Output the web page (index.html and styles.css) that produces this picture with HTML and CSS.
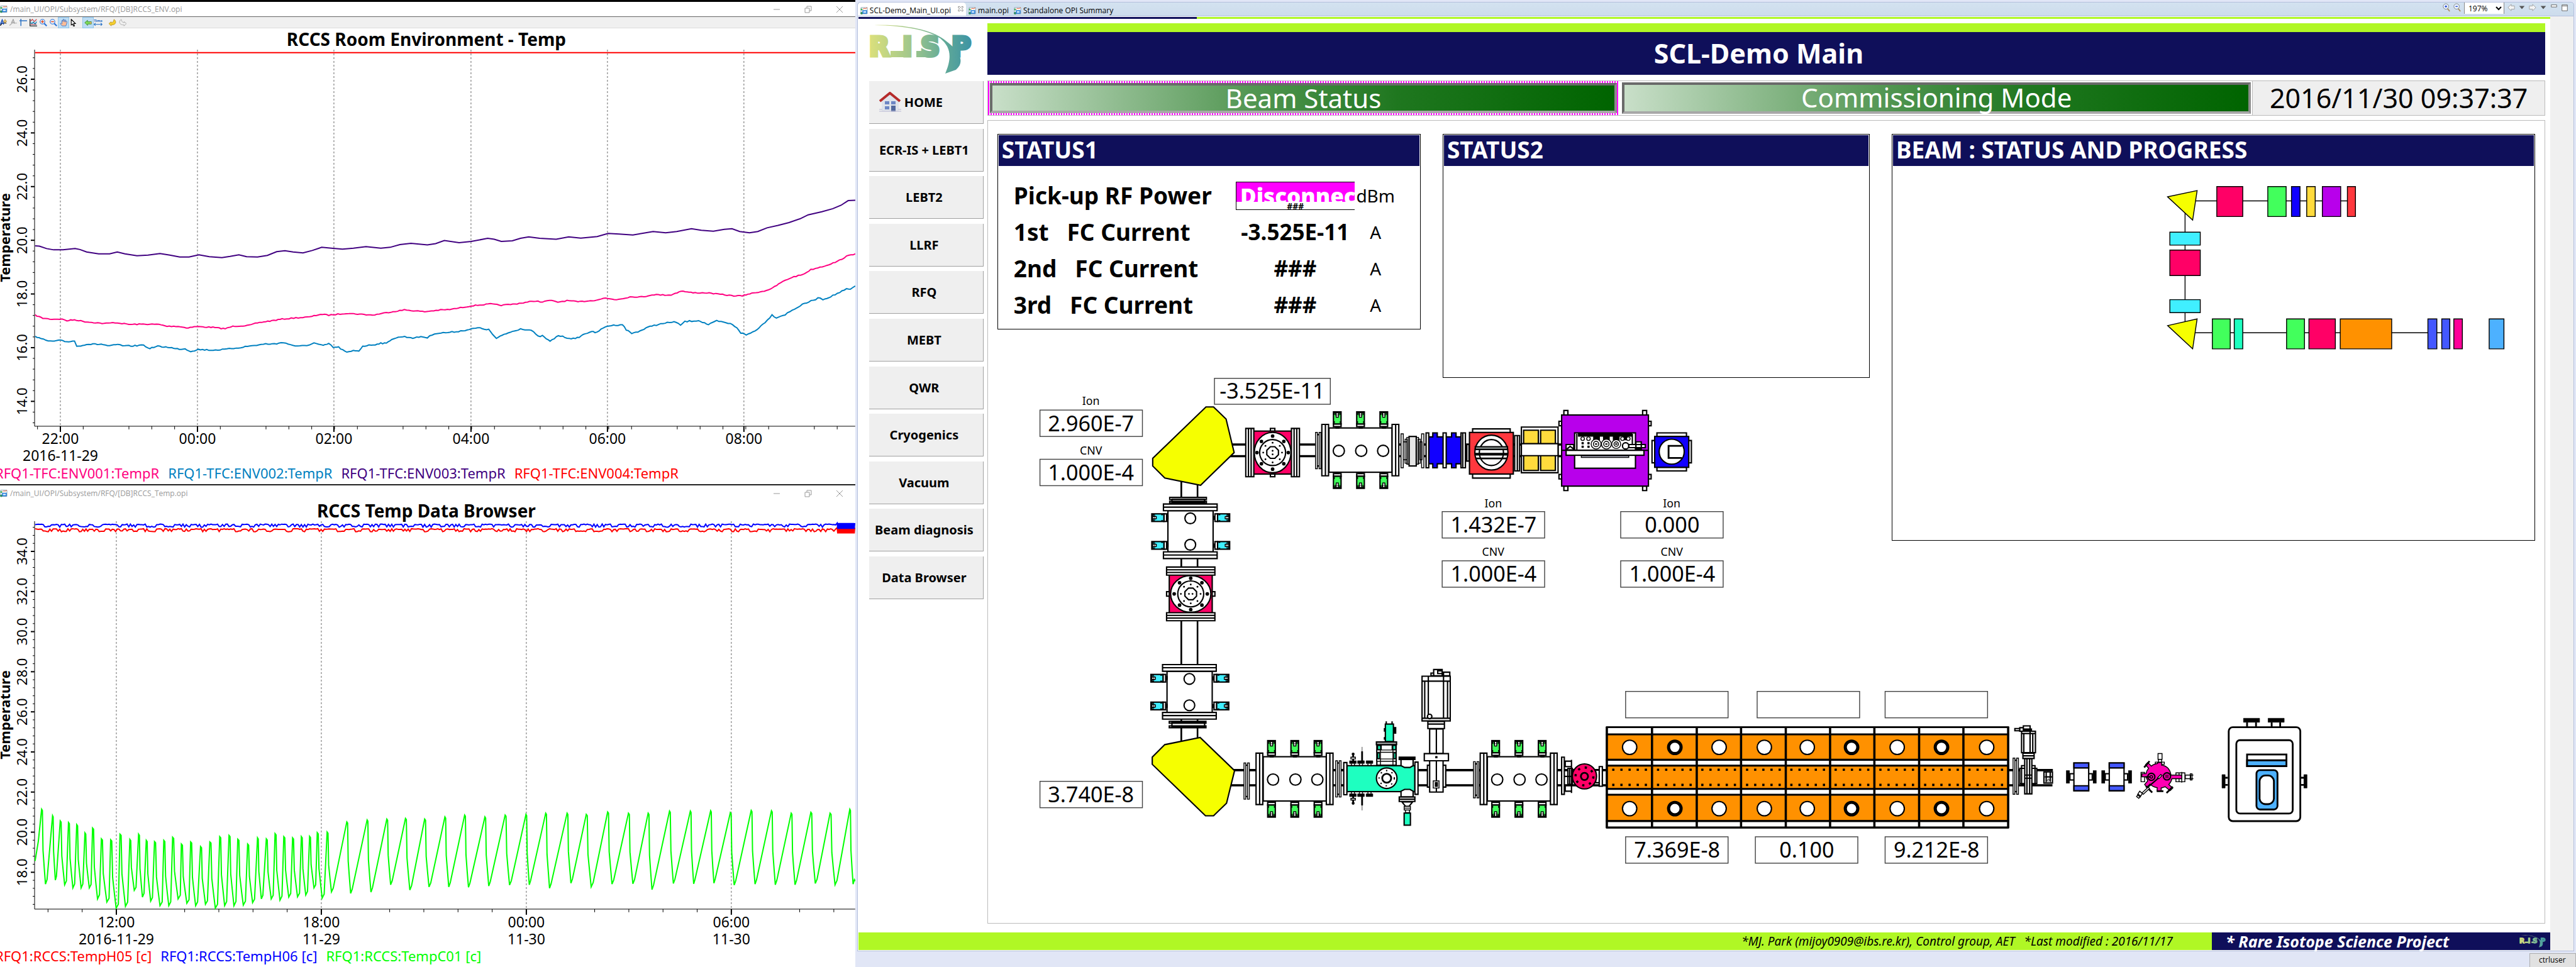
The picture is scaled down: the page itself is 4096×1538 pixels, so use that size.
FILE: index.html
```html
<!DOCTYPE html>
<html lang="en">
<head>
<meta charset="utf-8">
<title>SCL-Demo Main</title>
<link rel="stylesheet" href="styles.css">
</head>
<body>
<svg class="defs" width="0" height="0" aria-hidden="true">
  <defs>
    <linearGradient id="risp-fade" gradientUnits="userSpaceOnUse" x1="0" y1="0" x2="170" y2="0">
      <stop offset="0" stop-color="#dbe07c"/><stop offset=".4" stop-color="#9fc68c"/><stop offset=".7" stop-color="#62aa97"/><stop offset="1" stop-color="#3790a6"/>
    </linearGradient>
    <symbol id="risp" viewBox="0 0 172 80">
      <g fill="url(#risp-fade)">
        <text class="risp-letters" x="0 53 82 131" y="50">RISP</text>
        <path d="M34 42h21v10H34zM75 42h14v10H75z"/>
        <path d="M8 1C60-1 104 10 122 26C146 44 152 60 138 72L121 78C132 52 130 36 113 22C92 8 56 2 8 1Z"/>
      </g>
    </symbol>
    <symbol id="opi-icon" viewBox="0 0 12 12">
      <path d="M1 1h10v10H1z" fill="#fff" stroke="#8fa6b5"/><path d="M4 4l2-2 2 1 3-2" fill="none" stroke="#f0643c"/><circle cx="2" cy="4" r="1.500" fill="#3cae5a"/><circle cx="2" cy="10" r="2" fill="#2f8f62"/><path d="M4 6h6v4H4z" fill="#dcefff" stroke="#1e7ad6" stroke-width="1.500"/>
    </symbol>
  </defs>
</svg>

<div class="desktop">
  <aside class="plots">
    <section class="plot-window plot-window--env">
      <header class="titlebar">
        <svg class="titlebar__icon"><use href="#opi-icon"/></svg>
        <span class="titlebar__name">/main_UI/OPI/Subsystem/RFQ/[DB]RCCS_ENV.opi</span>
        <span class="titlebar__controls">
          <svg viewBox="0 0 12 12"><path d="M1 6h10"/></svg>
          <svg viewBox="0 0 12 12"><path d="M1 4h7v7H1zM4 4V1h7v7H8"/></svg>
          <svg viewBox="0 0 12 12"><path d="M1 1l10 10M11 1L1 11"/></svg>
        </span>
      </header>
      <div class="toolbar">
        <svg viewBox="0 0 16 16"><path d="M0 14c4 0 4-2 5-4s3-1 10-1" stroke="#000" fill="none" stroke-width="1.500"/><path d="M2 12L6 2l3 10M4 9h4" stroke="#1c50b8" fill="none" stroke-width="2"/><path d="M12 1l1 3 3 1-3 1-1 3-1-3-3-1 3-1z" fill="#ffd76a" stroke="#a8802a"/></svg>
        <svg viewBox="0 0 16 16"><path d="M0 14l6-5h10" stroke="#aaa" fill="none" stroke-width="1.500"/><path d="M4 9l4-8 3 9M5 7h5" stroke="#999" fill="none" stroke-width="1.500"/></svg>
        <svg viewBox="0 0 16 16"><path d="M0 4h16M3 0v15" stroke="#2f74c4" stroke-width="2"/></svg>
        <svg viewBox="0 0 16 16"><path d="M1 1h14v13H1z" fill="#c9f0ff"/><path d="M1 0v15h15" stroke="#000" fill="none" stroke-width="1.500"/><path d="M2 5l4-4 4 5 5-5M2 12h13" stroke="#d33" fill="none" stroke-width="1.500"/><path d="M2 8l3 2 3-3 4 4 3-5" stroke="#169" fill="none" stroke-width="1.500"/></svg>
        <svg viewBox="0 0 16 16"><path d="M9 9l6 6" stroke="#2c74d8" stroke-width="3"/><circle cx="6" cy="6" r="5" fill="#eef7ff" stroke="#2c74d8" stroke-width="1.500"/><path d="M3 6h6M6 3v6" stroke="#e0461c" stroke-width="2"/></svg>
        <svg viewBox="0 0 16 16"><path d="M9 9l6 6" stroke="#2c74d8" stroke-width="3"/><circle cx="6" cy="6" r="5" fill="#eef7ff" stroke="#2c74d8" stroke-width="1.500"/><path d="M3 6h6" stroke="#e0461c" stroke-width="2"/></svg>
        <svg class="is-on" viewBox="0 0 16 16"><path d="M5 15L1 10l2-1 2 1-1-6 2-1 1 3 0-5h2l1 5 1-4 2 1-1 4 2-2 2 1-3 9z" fill="#ffbd96" stroke="#1c6ad0"/></svg>
        <svg viewBox="0 0 16 16"><path d="M3 1l9 9H8l2 5-2 1-2-5-3 2z" fill="#fff" stroke="#000" stroke-width="1.500"/></svg>
        <svg class="is-on toolbar__gap" viewBox="0 0 16 16"><path d="M1 8l6-5v3h8v5H7v3z" fill="#7ed957" stroke="#2f7d23"/><path d="M12 7h3v3h-3z" fill="#f0a45a"/></svg>
        <svg class="time-icon" viewBox="0 0 20 16"><text x="10" y="6">Time</text><path d="M1 12h18M4 9l-3 3 3 3M16 9l3 3-3 3" stroke="#1b6ac4" fill="none" stroke-width="1.500"/></svg>
        <svg class="toolbar__gap" viewBox="0 0 16 16"><path d="M0 10l5-4v2c4 0 5-3 6-7 6 4 5 12-6 12v2z" fill="#f5cf2e" stroke="#b08a1a"/></svg>
        <svg viewBox="0 0 16 16"><path d="M16 10l-5-4v2C7 8 6 5 5 1c-6 4-5 12 6 12v2z" fill="#f0f0f0" stroke="#999"/></svg>
      </div>
      <h2>RCCS Room Environment - Temp</h2>
      <svg class="chart" id="chart-env" viewBox="0 79 1360 659" role="img" aria-label="Room temperature trend"></svg>
      <ul class="legend">
        <li class="c-pink">RFQ1-TFC:ENV001:TempR</li>
        <li class="c-blue">RFQ1-TFC:ENV002:TempR</li>
        <li class="c-indigo">RFQ1-TFC:ENV003:TempR</li>
        <li class="c-red">RFQ1-TFC:ENV004:TempR</li>
      </ul>
    </section>

    <section class="plot-window plot-window--temp">
      <header class="titlebar">
        <svg class="titlebar__icon"><use href="#opi-icon"/></svg>
        <span class="titlebar__name">/main_UI/OPI/Subsystem/RFQ/[DB]RCCS_Temp.opi</span>
        <span class="titlebar__controls">
          <svg viewBox="0 0 12 12"><path d="M1 6h10"/></svg>
          <svg viewBox="0 0 12 12"><path d="M1 4h7v7H1zM4 4V1h7v7H8"/></svg>
          <svg viewBox="0 0 12 12"><path d="M1 1l10 10M11 1L1 11"/></svg>
        </span>
      </header>
      <h2>RCCS Temp Data Browser</h2>
      <svg class="chart" id="chart-temp" viewBox="0 826 1360 680" role="img" aria-label="Cooling water temperature trend"></svg>
      <ul class="legend">
        <li class="c-red">RFQ1:RCCS:TempH05 [c]</li>
        <li class="c-navy">RFQ1:RCCS:TempH06 [c]</li>
        <li class="c-green">RFQ1:RCCS:TempC01 [c]</li>
      </ul>
    </section>
  </aside>

  <div class="station">
    <div class="tabbar">
      <div class="tabs">
        <a class="tab tab--active" href="#"><svg><use href="#opi-icon"/></svg>SCL-Demo_Main_UI.opi<svg class="tab__close" viewBox="0 0 10 10"><path d="M1 1h2l2 2 2-2h2v2L7 5l2 2v2H7L5 7 3 9H1V7l2-2-2-2z"/></svg></a>
        <a class="tab" href="#"><svg><use href="#opi-icon"/></svg>main.opi</a>
        <a class="tab" href="#"><svg><use href="#opi-icon"/></svg>Standalone OPI Summary</a>
      </div>
      <div class="zoombar">
        <svg viewBox="0 0 14 16"><circle cx="6" cy="6" r="5" fill="#eaf4ff" stroke="#777"/><path d="M4 6h4M6 4v4" stroke="#13c" stroke-width="1.500"/><path d="M9 10l4 5" stroke="#a88a5a" stroke-width="2"/></svg>
        <svg viewBox="0 0 14 16"><circle cx="6" cy="6" r="5" fill="#eaf4ff" stroke="#777"/><path d="M4 6h4" stroke="#13c" stroke-width="1.500"/><path d="M9 10l4 5" stroke="#a88a5a" stroke-width="2"/></svg>
        <select class="zoom" aria-label="Zoom"><option>197%</option></select>
        <svg viewBox="0 0 14 16"><path d="M1 8l6-6v3h6v6H7v3z" fill="#f4f4f4" stroke="#999"/></svg>
        <svg viewBox="0 0 14 16"><path d="M2 5h10L7 11z" fill="#555"/></svg>
        <svg viewBox="0 0 14 16"><path d="M13 8L7 2v3H1v6h6v3z" fill="#f4f4f4" stroke="#999"/></svg>
        <svg viewBox="0 0 14 16"><path d="M2 5h10L7 11z" fill="#555"/></svg>
        <svg viewBox="0 0 14 16"><path d="M2 3h10v4H2z" fill="#fff" stroke="#555"/></svg>
        <svg viewBox="0 0 14 16"><path d="M2 3h10v11H2zM2 5h10" fill="#fff" stroke="#555"/></svg>
      </div>
    </div>

    <div class="viewport">
      <div class="page">
        <div class="strip"></div>
        <div class="page__body">
          <div class="sidebar">
            <svg class="logo" role="img" aria-label="RISP"><use href="#risp"/></svg>
            <nav class="nav">
              <button class="nav__home" type="button"><svg viewBox="0 0 35 34"><path d="M4 12L17 2l14 10v20H4z" fill="#dfe3ea"/><path d="M1 15L17 2l16 13" fill="none" stroke="#b52a2a" stroke-width="4"/><path d="M9 15h7v5H9zM19 15h7v5h-7zM9 23h7v5H9z" fill="#6d86c4"/><path d="M19 22h7v10h-7z" fill="#52679c"/><path d="M0 28h5M30 28h5M0 31h35" stroke="#ccd" stroke-width="1.500"/></svg>HOME</button>
              <button type="button">ECR-IS + LEBT1</button>
              <button type="button">LEBT2</button>
              <button type="button">LLRF</button>
              <button type="button">RFQ</button>
              <button type="button">MEBT</button>
              <button type="button">QWR</button>
              <button type="button">Cryogenics</button>
              <button type="button">Vacuum</button>
              <button type="button">Beam diagnosis</button>
              <button type="button">Data Browser</button>
            </nav>
          </div>

          <main class="main">
            <h1>SCL-Demo Main</h1>
            <div class="modes">
              <div class="mode mode--lost"><span>Beam Status</span></div>
              <div class="mode"><span>Commissioning Mode</span></div>
              <time class="clock">2016/11/30 09:37:37</time>
            </div>

            <div class="workspace">
              <section class="panel panel--one">
                <h2>STATUS1</h2>
                <table class="readings">
                  <tr><th scope="row">Pick-up RF Power</th><td><div class="alarm"><b>Disconnected</b><small>###</small></div></td><td class="unit">dBm</td></tr>
                  <tr><th scope="row">1st   FC Current</th><td>-3.525E-11</td><td class="unit">A</td></tr>
                  <tr><th scope="row">2nd   FC Current</th><td>###</td><td class="unit">A</td></tr>
                  <tr><th scope="row">3rd   FC Current</th><td>###</td><td class="unit">A</td></tr>
                </table>
              </section>
              <section class="panel panel--two"><h2>STATUS2</h2></section>
              <section class="panel panel--beam">
                <h2>BEAM : STATUS AND PROGRESS</h2>
                <svg class="progress" viewBox="4230 371 1433 835" role="img" aria-label="Beam progress">
                  <path d="M4905 449h360M4883 470v250M4905 744h570" fill="none"/>
                  <path fill="#f6ff00" d="M4844 440L4910 426L4900 492ZM4844 728L4910 713L4900 780Z"/>
                  <path fill="#ff0066" d="M4954 417h58v67h-58zM4849 559h68v57h-68zM5160 713h59v67h-59z"/>
                  <path fill="#42ff5c" d="M5068 417h41v67h-41zM4944 713h40v67h-40zM5110 713h40v67h-40z"/>
                  <path fill="#1100ff" d="M5121 417h19v67h-19z"/>
                  <path fill="#ffdb3d" d="M5155 417h19v67h-19z"/>
                  <path fill="#b800eb" d="M5190 417h41v67h-41z"/>
                  <path fill="#ff383e" d="M5246 417h18v67h-18z"/>
                  <path fill="#40efff" d="M4849 519h68v29h-68zM4849 670h68v29h-68z"/>
                  <path fill="#1effc0" d="M4993 713h19v67h-19z"/>
                  <path fill="#ff9100" d="M5230 713h115v67h-115z"/>
                  <path fill="#4458ff" d="M5426 713h20v67h-20zM5457 713h18v67h-18z"/>
                  <path fill="#ff0099" d="M5484 713h19v67h-19z"/>
                  <path fill="#4db1ff" d="M5563 713h33v67h-33z"/>
                </svg>
              </section>

              <svg class="beamline" viewBox="2229 845 3437 1219" role="img" aria-label="Beam line">
                <defs>
                  <g id="actuator">
                    <path d="M7 33h6v4H7z" fill="#000"/><rect x="1" y="28" width="17" height="6"/>
                    <rect x="1" y="1" width="17" height="27" fill="#42ff5c"/>
                    <path d="M3 8v-5h3v6M16 8v-5h-3v6M3 26v-4M16 26v-4" fill="none" stroke-width="2"/>
                    <rect x="7" y="3" width="5" height="10" stroke-width="2"/><path d="M7 8h5" stroke-width="1"/>
                  </g>
                  <g id="actuator-c">
                    <path d="M7 33h6v4H7z" fill="#000"/><rect x="1" y="28" width="17" height="6"/>
                    <rect x="1" y="1" width="17" height="27" fill="#40efff"/>
                    <path d="M3 8v-5h3v6M16 8v-5h-3v6M3 26v-4M16 26v-4" fill="none" stroke-width="2"/>
                    <rect x="7" y="3" width="5" height="8" stroke-width="2"/><path d="M7 7h5" stroke-width="1"/>
                  </g>
                  <g id="quad">
                    <rect x="17" y="9" width="141" height="99"/>
                    <path d="M1 1h15v115H1zM158 1h15v115h-15zM9 1v115M166 1v115"/>
                    <circle cx="39" cy="60" r="12.500"/><circle cx="89" cy="60" r="12.500"/><circle cx="138" cy="60" r="12.500"/>
                    <use href="#actuator" x="26" y="-28"/><use href="#actuator" x="78" y="-28"/><use href="#actuator" x="130" y="-28"/>
                    <use href="#actuator" transform="translate(45 145) rotate(180)"/><use href="#actuator" transform="translate(97 145) rotate(180)"/><use href="#actuator" transform="translate(149 145) rotate(180)"/>
                  </g>
                  <g id="quad-v">
                    <rect x="11" y="16" width="101" height="92"/>
                    <path d="M1 1h120v15H1zM1 108h120v15H1zM1 8h120M1 115h120"/>
                    <circle cx="61" cy="33" r="12"/><circle cx="61" cy="92" r="12"/>
                    <use href="#actuator-c" transform="translate(-26 41) rotate(-90)"/><use href="#actuator-c" transform="translate(-26 103) rotate(-90)"/>
                    <use href="#actuator-c" transform="translate(150 22) rotate(90)"/><use href="#actuator-c" transform="translate(150 84) rotate(90)"/>
                  </g>
                  <g id="adapter"><rect x="4" y="6" width="6" height="70"/><path d="M1 1h4v81H1zM9 1h4v81H9z" stroke-width="2"/></g>
                  <g id="cup">
                    <rect x="-5" y="-54" width="10" height="108"/>
                    <rect x="-43" y="-48" width="86" height="96" fill="#ff0066"/>
                    <path d="M-60-54h18V54h-18zM42-54h18V54h-18zM-54-54V54M-48-54V54M54-54V54M48-54V54"/>
                    <ellipse rx="41" ry="45"/><circle r="29"/><path d="M-5-13h10l8 8v10l-8 8h-10l-8-8v-10z"/>
                    <g fill="#000" stroke="none">
                      <circle cx="0" cy="-37" r="4"/><circle cx="0" cy="37" r="4"/><circle cx="-35" r="4"/><circle cx="35" r="4"/>
                      <circle cx="-25" cy="-25" r="4"/><circle cx="25" cy="-25" r="4"/><circle cx="-25" cy="25" r="4"/><circle cx="25" cy="25" r="4"/>
                      <circle cy="-22" r="2"/><circle cy="22" r="2"/><circle cx="-21" r="2"/><circle cx="21" r="2"/>
                      <circle cx="-16" cy="-15" r="2"/><circle cx="16" cy="-15" r="2"/><circle cx="-16" cy="15" r="2"/><circle cx="16" cy="15" r="2"/>
                      <circle cy="-4" r="2"/><circle cy="4" r="2"/>
                    </g>
                  </g>
                  <g id="magnet">
                    <rect x="8" y="25" width="50" height="14"/>
                    <rect x="17" y="1" width="33" height="62"/><path d="M17 1h33v11H17zM17 52h33v11H17z" fill="#4458ff"/>
                    <path d="M1 19h5v26H1zM61 19h5v26h-5z" fill="#000"/>
                  </g>
                </defs>

                <!-- beam pipes -->
                <g stroke-width="5" fill="none">
                  <path d="M2740 994h400M2740 1020h400M3170 994h330M3170 1020h330M2740 1722h860M2740 1756h860M4485 1722h103M4485 1756h102"/>
                  <path d="M2640 1075v600M2676 1075v600" stroke-width="4"/>
                </g>
                <path d="M2642 1080h32v590h-32zM2750 997h380v20h-380zM2750 1726h840v27h-840z" stroke="none"/>

                <!-- bending magnets -->
                <g fill="#f6ff00">
                  <path d="M2695 910H2712L2740 937L2758 1012L2683 1085L2603 1069L2576 1042V1025Z"/>
                  <path d="M2694 1824H2712L2741 1796L2759 1723L2682 1649L2603 1665L2575 1693V1709Z"/>
                </g>

                <!-- vertical leg -->
                <path d="M2619 1116h73v6h-73zM2614 1112h82v5h-82zM2614 1121h82v4h-82z"/>
                <use href="#quad-v" x="2599" y="1126"/>
                <use href="#cup" transform="translate(2661 1328) rotate(90)"/>
                <use href="#quad-v" x="2597" y="1485"/>
                <path d="M2619 1616h73v8h-73zM2613 1613h82v4h-82zM2613 1623h82v4h-82z"/>

                <!-- upper leg -->
                <use href="#cup" x="2844" y="1012"/>
                <use href="#adapter" x="2939" y="966"/>
                <use href="#quad" x="2953" y="948"/>
                <path d="M3136 988h8v40h-8zM3140 982h5v54h-5zM3144 978h5v60h-5zM3165 978h5v60h-5zM3169 982h5v54h-5zM3173 988h5v40h-5zM3131 970h5v76h-5zM3177 970h5v76h-5z" stroke-width="2"/>
                <rect x="3149" y="976" width="16" height="66" fill="#e6e6e6"/>
                <path d="M3192 977h10v-9h10v9h32v-9h10v9h12v60h-12v9h-10v-9h-32v9h-10v-9h-10z" fill="#1100ff"/>
                <path d="M3187 968h6v78h-6zM3225 968h7v78h-7zM3265 968h10v78h-10zM3269 968v78M3278 994h5v37h-5z"/>
                <path d="M3291 959h84v9h-84zM3291 1060h84v9h-84zM3385 974h11v79h-11zM3391 974v79"/>
                <rect x="3284" y="967" width="98" height="93" fill="#ff383e"/>
                <ellipse cx="3333" cy="1012" rx="37" ry="39"/><ellipse cx="3333" cy="1012" rx="27" ry="29"/>
                <path d="M3297 999h72v6h-72zM3297 1014h72v3h-72z" fill="#8d9693"/><path d="M3298 1025h70" stroke-width="4"/>
                <path d="M3400 955h82v102h-82z"/><path d="M3405 962h33v90h-33zM3443 962h33v90h-33z" fill="#ffdb3d"/>
                <path d="M3400 992h82v27h-82z"/>
                <path d="M3495 918h9v10h-9zM3671 918h9v10h-9zM3495 1087h9v10h-9zM3671 1087h9v10h-9zM3484 942h6v10h-6zM3484 1061h6v10h-6zM3684 942h6v10h-6zM3684 1061h6v10h-6z"/>
                <rect x="3490" y="928" width="194" height="159" fill="#b800eb"/>
                <rect x="3519" y="968" width="136" height="79"/>
                <path d="M3528 969h118v6h-10v8h-8v-8h-10v8h-12v-8h-10v8h-12v-8h-10v8h-12v-8h-34z" fill="#000"/>
                <path d="M3500 994h17v12h-17zM3502 1004l7-6 8 6M3524 970v36M3648 970v24"/>
                <path d="M3490 1007h194"/><rect x="3500" y="1007" width="174" height="11"/>
                <path d="M3534 1019h106v4h-106z" fill="#aab" stroke-width="2"/>
                <g stroke-width="2"><circle cx="3567" cy="993" r="11"/><circle cx="3590" cy="993" r="11"/><circle cx="3612" cy="993" r="10"/><circle cx="3567" cy="993" r="6"/><circle cx="3590" cy="993" r="6"/><circle cx="3612" cy="993" r="5"/><circle cx="3537" cy="981" r="4"/><circle cx="3550" cy="981" r="4"/><circle cx="3626" cy="981" r="4"/><circle cx="3639" cy="981" r="4"/></g>
                <path d="M3535 989h4v4h-4zM3548 989h4v4h-4zM3535 997h4v4h-4zM3548 997h4v4h-4zM3565 992h4v2h-4zM3588 992h4v2h-4zM3610 992h4v2h-4z" fill="#000" stroke-width="1"/>
                <path d="M3656 988h12v16h-12zM3640 994h37v7h-37z"/><circle cx="3633" cy="997" r="7"/>
                <path d="M3703 968h66v8h-66zM3703 1045h66v8h-66zM3692 985h6v50h-6zM3774 985h6v50h-6z"/>
                <rect x="3698" y="976" width="76" height="69" fill="#1100ff"/><circle cx="3736" cy="1010" r="28"/>
                <path d="M3759 997h-30v27h30" stroke-width="4" fill="none"/>

                <!-- lower leg -->
                <use href="#adapter" x="2779" y="1705"/>
                <use href="#quad" x="2806" y="1683"/>
                <use href="#adapter" x="2984" y="1700"/>
                <rect x="3010" y="1712" width="152" height="58" fill="#1effc0"/>
                <path d="M3003 1705h7v72h-7zM3162 1704h7v72h-7z"/>
                <path d="M3016 1701h15v6h-15zM3034 1701h15v6h-15zM3053 1701h15v6h-15zM3016 1775h15v6h-15zM3034 1775h15v6h-15zM3053 1775h15v6h-15z" fill="#000" stroke-width="1"/>
                <path d="M3020 1707v5M3027 1707v5M3038 1707v5M3045 1707v5M3057 1707v5M3064 1707v5M3020 1770v5M3027 1770v5M3038 1770v5M3045 1770v5M3057 1770v5M3064 1770v5" stroke-width="2"/>
                <path d="M3024 1683v18M3024 1781v18M3044 1680v21M3044 1781v20M3021 1686h6M3021 1796h6" stroke-width="4"/>
                <path d="M3044 1670v30M3044 1781v31" stroke-width="1"/>
                <path d="M3019 1693h10v4h-10zM3019 1785h10v4h-10z" stroke-width="2"/>
                <path d="M3077 1665h43v46h-43z"/><path d="M3079 1667h8v9h-8zM3111 1667h8v9h-8zM3079 1684h4v12h-4zM3115 1684h4v12h-4z" fill="#1effc0" stroke-width="2"/><path d="M3077 1677h43v5h-43zM3077 1697h43v5h-43zM3085 1665v46M3113 1665v46" stroke-width="2"/>
                <rect x="3076" y="1659" width="45" height="6" fill="#aaa"/>
                <rect x="3096" y="1619" width="18" height="39" fill="#1effc0"/><path d="M3098 1613v6M3111 1613v6M3094 1628v8M3094 1648v6M3116 1627h3v12h-3z"/>
                <circle cx="3099" cy="1740" r="23"/><circle cx="3099" cy="1740" r="17" stroke-width="3" stroke-dasharray="3 10" fill="none"/><circle cx="3099" cy="1740" r="10" stroke-width="4"/>
                <path d="M3131 1698v14l8 4h12l7-4v-14zM3131 1782v-13l8-4h12l7 4v13z"/><path d="M3127 1693h35v5h-35z" fill="#000"/>
                <path d="M3127 1782h35v10h-35zM3127 1787h35M3133 1793h24l-8 10h-8z"/><path d="M3138 1803h14v8h-14zM3141 1811h9v6h-9zM3138 1807h14" stroke-width="2"/><rect x="3138" y="1818" width="14" height="27" fill="#1effc0"/>
                <path d="M3204 1497h19v14h-19zM3198 1505h6v6h-6zM3226 1503h14v8h-14zM3213 1500h10v6h-10z"/>
                <path d="M3178 1512h63v100h-63zM3178 1523h63M3178 1606h63M3184 1523v83M3192 1512v94M3226 1512v94M3235 1523v83" stroke-width="3"/><circle cx="3195" cy="1602" r="5"/>
                <path d="M3191 1613h37v16h-37zM3191 1619h37M3195 1630h30v55h-30zM3210 1630v55"/>
                <path d="M3190 1711h41v49h-41z"/><path d="M3195 1701h30v70h-30zM3210 1701v70"/><path d="M3183 1685h54v16h-54z"/><path d="M3203 1746h13v16h-13z" stroke-width="2"/><path d="M3208 1750h4v8h-4zM3209 1692h2v2h-2z" fill="#000"/>
                <use href="#adapter" x="3292" y="1702"/>
                <use href="#quad" x="3307" y="1683"/>
                <path d="M3490 1693h6v83h-6z"/><path d="M3498 1702h14v12h-14zM3498 1757h14v12h-14zM3504 1718h10v36h-10zM3508 1718v36M3497 1736h20M3512 1699v74" stroke-width="3"/>
                <path d="M3566 1722h8v28h-8zM3574 1714h7v44h-7z"/>
                <ellipse cx="3541" cy="1736" rx="27" ry="28" fill="#ff0066"/><circle cx="3541" cy="1736" r="20" stroke-width="5" stroke-dasharray="5 10.700" fill="none"/><circle cx="3541" cy="1736" r="8" stroke-width="4" fill="#ff0066"/>

                <!-- cryomodule -->
                <rect x="3591" y="1626" width="897" height="225"/>
                <path d="M3591 1642h897v56h-897zM3591 1712h897v52h-897zM3591 1777h897v58h-897z" fill="#ff9100"/>
                <path d="M3589 1626h901M3589 1642h901M3589 1699h901M3589 1712h901M3589 1764h901M3589 1777h901M3589 1836h901M3589 1850h901" stroke-width="4"/>
                <path d="M3591 1625v226M3692 1625v226M3792 1625v226M3891 1625v226M3991 1625v226M4090 1625v226M4189 1625v226M4289 1625v226M4388 1625v226M4488 1625v226" stroke-width="5"/>
                <g id="ports">
                  <circle cx="3642" cy="1671" r="16"/><circle cx="3743" cy="1671" r="14" stroke-width="7"/><circle cx="3842" cy="1671" r="16"/><circle cx="3943" cy="1671" r="16"/><circle cx="4039" cy="1671" r="16"/><circle cx="4138" cy="1671" r="14" stroke-width="7"/><circle cx="4240" cy="1671" r="16"/><circle cx="4339" cy="1671" r="14" stroke-width="7"/><circle cx="4440" cy="1671" r="16"/>
                </g>
                <use href="#ports" y="137"/>
                <g id="bolts" stroke-width="5" stroke-dasharray="5 13.200" fill="none">
                  <path id="bolt-row" d="M3603 1721h80"/><use href="#bolt-row" x="100"/><use href="#bolt-row" x="199"/><use href="#bolt-row" x="299"/><use href="#bolt-row" x="398"/><use href="#bolt-row" x="497"/><use href="#bolt-row" x="597"/><use href="#bolt-row" x="697"/><use href="#bolt-row" x="796"/>
                </g>
                <use href="#bolts" y="34"/>

                <!-- diagnostics after the cryomodule -->
                <use href="#adapter" x="4498" y="1694"/>
                <path d="M4514 1718h38v34h-38zM4518 1712h30v42h-30z"/>
                <path d="M4525 1696h16v79h-16zM4530 1696v79M4536 1696v79M4525 1733h16v7h-16z"/>
                <path d="M4521 1684h25v12h-25zM4521 1690h25M4518 1635h31v48h-31zM4518 1640h31M4523 1640v43M4537 1635v48M4543 1640v43"/>
                <path d="M4522 1623h15v10h-15zM4514 1627h8v8h-8zM4503 1629h11v5h-11z"/><path d="M4524 1630h16v5h-16z" fill="#000"/>
                <path d="M4568 1726h19v25h-19zM4573 1726v25M4582 1726v25M4570 1737h16"/><path d="M4572 1750l6-9 6 9z" fill="#bbb" stroke-width="1"/>
                <use href="#magnet" x="4618" y="1705"/><use href="#magnet" x="4697" y="1705"/>
                <g>
                  <path d="M4823 1685h9v13h-9zM4824 1698v8M4831 1698v8M4817 1704h20v5h-20z" stroke-width="2"/>
                  <path d="M4785 1727h8v21h-8zM4863 1728h20v20h-20zM4884 1733h12v8h-12zM4895 1730h4v14h-4zM4870 1728v20M4876 1726v24M4893 1733h9M4893 1741h9" stroke-width="2"/>
                  <path d="M4822 1705h9v6c10 1 18 6 21 22h24v8h-22c-1 6-4 10-7 13l9 8-6 6-11-9-9 3v6h-9v-7c-7-1-12-4-16-8l-7 7-5-6 7-8-4-9h-9v-7h9c1-5 3-9 6-12l-7-8 5-5 8 8c4-4 8-5 14-6z" fill="#ff00b3" stroke-width="2"/>
                  <path d="M4820 1769h15M4792 1716l12-14M4796 1758l14 14M4842 1773l14-14" stroke-width="4"/>
                  <g fill="none"><circle cx="4808" cy="1737" r="8"/><circle cx="4808" cy="1737" r="3" stroke-width="2"/><circle cx="4843" cy="1736" r="8"/><path d="M4841 1732v8M4845 1732v8" stroke-width="2"/></g>
                  <path d="M4795 1737h10M4826 1738l-28 24"/><path d="M4822 1739l7-7 3 2-7 7z" stroke-width="2"/>
                  <path d="M4801 1760l-14 13 3 3 14-13zM4782 1769l6 5-5 8-6-5zM4779 1776l5 4-4 5-5-4z" stroke-width="2"/>
                </g>

                <!-- beam dump -->
                <path d="M5014 1606h36v9h-36zM5069 1606h36v9h-36zM4966 1732h7v30h-7zM5149 1732h7v30h-7z" fill="#000" stroke-width="1"/>
                <path d="M5022 1615v10M5042 1615v10M5077 1615v10M5096 1615v10M4973 1739h6M4973 1755h6M5142 1739h8M5142 1755h8" stroke-width="4"/>
                <g stroke-width="4"><rect x="4981" y="1626" width="160" height="210" rx="9"/><rect x="4998" y="1655" width="126" height="164" rx="8"/>
                  <rect x="5022" y="1687" width="88" height="26"/><path d="M5022 1700h88v13h-88z" fill="#4db1ff"/>
                  <rect x="5043" y="1722" width="47" height="88" rx="8" fill="#4db1ff"/><rect x="5050" y="1734" width="32" height="64" rx="13"/></g>

                <!-- vacuum gauges and cup readouts -->
                <g class="gauge">
                  <rect x="2714" y="846" width="259" height="58"/><text x="2843" y="892">-3.525E-11</text>
                  <rect x="2324" y="917" width="229" height="59"/><text x="2438" y="964">2.960E-7</text>
                  <rect x="2324" y="1027" width="229" height="59"/><text x="2438" y="1074">1.000E-4</text>
                  <rect x="3223" y="1144" width="229" height="59"/><text x="3338" y="1191">1.432E-7</text>
                  <rect x="3223" y="1254" width="229" height="59"/><text x="3338" y="1301">1.000E-4</text>
                  <rect x="3622" y="1144" width="229" height="59"/><text x="3737" y="1191">0.000</text>
                  <rect x="3622" y="1254" width="229" height="59"/><text x="3737" y="1301">1.000E-4</text>
                  <rect x="2324" y="1747" width="229" height="59"/><text x="2438" y="1794">3.740E-8</text>
                  <rect x="3633" y="1546" width="229" height="59"/><rect x="3927" y="1546" width="229" height="59"/><rect x="4213" y="1546" width="229" height="59"/>
                  <rect x="3633" y="1871" width="229" height="59"/><text x="3748" y="1918">7.369E-8</text>
                  <rect x="3923" y="1871" width="229" height="59"/><text x="4038" y="1918">0.100</text>
                  <rect x="4213" y="1871" width="229" height="59"/><text x="4328" y="1918">9.212E-8</text>
                </g>
                <g class="gauge-name">
                  <text x="2438" y="906">Ion</text><text x="2438" y="1016">CNV</text>
                  <text x="3337" y="1134">Ion</text><text x="3337" y="1243">CNV</text>
                  <text x="3736" y="1134">Ion</text><text x="3736" y="1243">CNV</text>
                </g>
              </svg>
            </div>
          </main>
        </div>
        <footer class="credits">
          <p class="credits__author">*MJ. Park (mijoy0909@ibs.re.kr), Control group, AET   *Last modified : 2016/11/17</p>
          <p class="credits__project">* Rare Isotope Science Project<svg><use href="#risp"/></svg></p>
        </footer>
      </div>
    </div>
    <div class="statusbar"><span class="user">ctrluser</span></div>
  </div>
</div>
<script src="charts.js"></script>
</body>
</html>
```

FILE: styles.css
```css
* { box-sizing: border-box; }

body {
  margin: 0;
  background: #e1e6f6;
  color: #000;
  font-family: "Noto Sans", "Open Sans", sans-serif;
  font-size: 22px;
}

h1, h2, p, ul { margin: 0; padding: 0; }

.defs { position: absolute; }

.desktop {
  display: flex;
  gap: 3px;
  min-height: 100vh;
}

/* trend windows */
.plots {
  flex: 0 0 33.2%;
  display: flex;
  flex-direction: column;
  overflow: hidden;
  background: #fff;
}

.plot-window--env { border-top: 3px solid #000; padding-bottom: 4px; }
.plot-window--temp { border-top: 2px solid #222; }

.titlebar {
  display: flex;
  align-items: center;
  height: 24px;
  gap: 4px;
  border-bottom: 1px solid #666;
  color: #999;
  font: 12px "Open Sans", sans-serif;
}
.plot-window--temp .titlebar { height: 26px; border-bottom: 0; }
.titlebar__icon { width: 12px; height: 17px; }
.titlebar__controls {
  display: flex;
  gap: 38px;
  margin-left: auto;
  padding-right: 19px;
}
.titlebar__controls svg {
  width: 12px;
  height: 12px;
  fill: none;
  stroke: #999;
}

.toolbar {
  display: flex;
  align-items: center;
  height: 18px;
  margin-left: -3px;
  background: #f0f0f0;
  border-bottom: 1px solid #ddd;
}
.toolbar svg { width: 16px; height: 16px; padding: 2px; }
.toolbar .is-on { background: #bcdcf4; outline: 1px solid #8fc4ea; }
.toolbar .toolbar__gap { margin-left: 7px; }
.toolbar .time-icon { padding: 1px; }
.time-icon text { fill: #1b6ac4; font-size: 8px; font-weight: 700; text-anchor: middle; }

.plot-window h2 {
  height: 34px;
  padding-right: 4px;
  font-size: 28px;
  line-height: 34px;
  text-align: center;
}
.plot-window--temp h2 { height: 28px; line-height: 28px; }

.chart { display: block; width: 100%; overflow: visible; }
.chart .axis { stroke: #000; stroke-width: 1; fill: none; }
.chart .major { stroke: #000; stroke-width: 2; }
.chart .minor { stroke: #000; stroke-width: 1; }
.chart .grid { stroke: #000; stroke-width: 1; stroke-dasharray: 3 3; stroke-opacity: .6; }
.chart .series { fill: none; stroke-width: 2; }
.chart text { text-anchor: middle; font-size: 23px; }
.chart text.y { font-size: 22px; }
.chart text.axis-name { font-size: 22px; font-weight: 700; }

.legend {
  display: flex;
  gap: 14px;
  height: 28px;
  margin-left: -8px;
  line-height: 28px;
  list-style: none;
  white-space: nowrap;
}
.c-pink { color: #ff0080; stroke: #ff0080; }
.c-blue { color: #0080c0; stroke: #0080c0; }
.c-indigo { color: #400080; stroke: #400080; }
.c-red { color: #f00; stroke: #f00; }
.c-navy { color: #00f; stroke: #00f; }
.c-green { color: #0f0; stroke: #0f0; }
.legend li { stroke: none; }

/* operator station */
.station {
  flex: 1;
  min-width: 0;
  display: flex;
  flex-direction: column;
  padding: 3px 3px 0 0;
}

.tabbar {
  display: flex;
  justify-content: space-between;
  height: 23px;
  background: linear-gradient(#d3e2f0, #cddcec);
  border: 1px solid #b4c0dc;
  border-radius: 5px 5px 0 0;
  font: 12px "Open Sans", sans-serif;
}
.tabs { display: flex; }
.tab {
  display: flex;
  align-items: center;
  gap: 3px;
  padding: 4px 4px 0 4px;
  color: #000;
  text-decoration: none;
}
.tab svg { width: 12px; height: 14px; }
.tab .tab__close {
  width: 9px;
  height: 10px;
  margin: -6px 0 0 8px;
  fill: #fff;
  stroke: #777;
}
.tab--active { background: #fff; border-radius: 5px 5px 0 0; }

.zoombar {
  display: flex;
  align-items: flex-start;
  gap: 5px;
  padding-right: 8px;
}
.zoombar svg { width: 12px; height: 16px; }
.zoom {
  width: 64px;
  height: 18px;
  padding: 0 2px;
  border: 1px solid #888;
  border-width: 0 1px 0 1px;
  background: #fff;
  color: #000;
  font: 12px "Open Sans", sans-serif;
}

.viewport {
  display: flex;
  padding: 1px 37px 1px 1px;
  background: linear-gradient(#f0f0f0, #f0f0f0) right / 37px 100% no-repeat #fff;
  border: 1px solid #b4c0dc;
  border-top: 0;
}
.page { flex: 1; min-width: 0; background: #fff; }
.strip { height: 3px; background: linear-gradient(90deg, #0f0f5a 20%, #b0f725 20%); }
.page__body {
  display: flex;
  padding: 7px 8px 14px 0;
}

.sidebar { flex: 0 0 205px; padding: 2px 6px 0 17px; }
.logo { display: block; width: 172px; height: 80px; margin-bottom: 10px; }
.risp-letters {
  font: 700 42px "DejaVu Sans", sans-serif;
  stroke: url(#risp-fade);
  stroke-width: 5px;
}

.nav {
  display: flex;
  flex-direction: column;
  justify-content: space-between;
  height: 824px;
}
.nav button {
  display: flex;
  align-items: center;
  justify-content: center;
  height: 68px;
  padding: 0 6px 0 0;
  background: #efefef;
  border: solid #a0a0a0;
  border-width: 0 1px 1px 0;
  font: 700 20px "Noto Sans", sans-serif;
  white-space: nowrap;
}
.nav .nav__home { justify-content: flex-start; gap: 5px; padding-left: 16px; }
.nav__home svg { width: 35px; height: 34px; }

.main { flex: 1; min-width: 0; }
h1 {
  height: 82px;
  padding-right: 24px;
  border-top: 14px solid #b0f725;
  background: #0f0f5a;
  color: #fff;
  font-size: 43px;
  line-height: 68px;
  text-align: center;
}

.modes {
  display: grid;
  grid-template-columns: 1004fr 1008fr 465fr;
  height: 56px;
  margin: 9px 0 7px;
  border: 1px solid #bbb;
}
.mode {
  display: flex;
  margin-left: 3px;
  padding: 2px;
}
.mode--lost {
  margin: 0;
  padding: 3px;
  background: repeating-linear-gradient(90deg, #f0f 0 2px, #fff 2px 4px);
}
.mode span {
  flex: 1;
  border: 4px solid;
  border-color: #6a6a6a #8c8c8c #a8a8a8 #6a6a6a;
  background: linear-gradient(90deg, #c9dfc9, #529652 42%, #1f771f 65%, #006400);
  color: #fff;
  font-size: 42px;
  line-height: 40px;
  text-align: center;
}
.clock {
  background: #efefef;
  border-left: 1px solid #bbb;
  font-size: 43px;
  line-height: 54px;
  text-align: center;
}

.workspace {
  display: grid;
  grid-template-columns: 673fr 679fr 1023fr;
  column-gap: 35px;
  align-items: start;
  padding: 21px 15px 0;
  border: 1px solid #bbb;
}
.panel { padding: 1px; border: 1px solid #000; }
.panel h2 {
  height: 49px;
  padding-left: 5px;
  background: #0f0f5a;
  color: #fff;
  font-size: 37px;
  line-height: 46px;
  white-space: nowrap;
}
.panel--one { min-height: 311px; }
.panel--two { min-height: 388px; }
.panel--beam { grid-area: 1 / 3 / span 2; }
.progress { display: block; width: 100%; stroke: #000; stroke-width: 2; }

.readings {
  width: 91%;
  margin: 18px 0 0 24px;
  border-collapse: collapse;
  table-layout: fixed;
  font-size: 35px;
  font-weight: 700;
}
.readings tr { height: 58px; }
.readings th, .readings td { padding: 0; line-height: 44px; }
.readings th {
  width: 58%;
  font-size: 37px;
  text-align: left;
  white-space: pre;
}
.readings td { width: 31%; text-align: center; }
.readings .unit { width: 11%; font-size: 28px; font-weight: 400; }
.alarm {
  height: 45px;
  border: 1px solid #000;
  border-right: 0;
  overflow: hidden;
}
.alarm b {
  display: block;
  height: 31px;
  padding-left: 6px;
  overflow: hidden;
  background: #f0f;
  color: #fff;
  font-size: 35px;
  text-align: left;
}
.alarm small { display: block; font-size: 14px; line-height: 13px; }

.beamline {
  grid-area: 2 / 1 / auto / -1;
  display: block;
  width: 100%;
  fill: #fff;
  stroke: #000;
  stroke-width: 3;
}
.beamline text { fill: #000; stroke: none; text-anchor: middle; }
.gauge { font-size: 48px; stroke: #444; stroke-width: 2; }
.gauge-name { font-size: 25px; }

.credits { display: flex; height: 28px; }
.credits p {
  font-style: italic;
  line-height: 28px;
  white-space: pre;
}
.credits__author {
  flex: 1;
  padding-right: 62px;
  background: #b0f725;
  font-size: 19px;
  text-align: right;
}
.credits__project {
  display: flex;
  flex: 0 0 20%;
  justify-content: space-between;
  padding: 0 5px 0 22px;
  background: #0f0f5a;
  color: #fff;
  font-size: 25px;
  font-weight: 700;
}
.credits__project svg { width: 44px; height: 28px; }

.statusbar {
  display: flex;
  flex: 1;
  justify-content: flex-end;
  margin-right: -3px;
  padding-top: 3px;
}
.user {
  width: 74px;
  padding: 1px 0 0 14px;
  background: #e1e1e1;
  border: 1px solid #adadad;
  border-bottom: 0;
  font: 12px "Open Sans", sans-serif;
}
```

FILE: charts.js
```js
const NS = "http://www.w3.org/2000/svg";

function add(parent, tag, attrs, text) {
  const el = document.createElementNS(NS, tag);
  for (const key in attrs) el.setAttribute(key, attrs[key]);
  if (text) el.textContent = text;
  parent.appendChild(el);
  return el;
}

let seed = 7;
function noise() {
  seed = (seed * 16807) % 2147483647;
  return seed / 2147483647 - 0.5;
}

// Samples are stored on a 0-1561 grid in both directions.
const scaleX = 0.8713;

function drawChart(id, c) {
  const svg = document.getElementById(id);
  const right = 1360;
  c.xMajor.forEach((x, i) => {
    add(svg, "path", { class: "grid", d: `M${x} ${c.top}V${c.bottom}` });
    c.xLabels[i].forEach((label, row) =>
      add(svg, "text", { x, y: c.labelY[row] }, label));
  });
  add(svg, "path", { class: "axis", d: `M55 ${c.top}V${c.bottom}H${right}` });
  c.series.forEach(s => {
    const d = s.points.map(([x, y], i) =>
      (i ? "L" : "M") + (x * scaleX).toFixed(1) + " " + (c.y0 + y * c.scaleY).toFixed(1)).join("");
    add(svg, "path", { class: "series " + s.name, d });
  });
  c.xMajor.forEach(x => {
    add(svg, "path", { class: "major", d: `M${x} ${c.bottom}v9` });
  });
  const pitch = c.xMajor[1] - c.xMajor[0];
  for (let k = -3; k < 40; k++) {
    const x = c.xMajor[0] + k * pitch / 6;
    if (x > 58 && x < right && k % 6 !== c.skip) add(svg, "path", { class: "minor", d: `M${x} ${c.bottom}v5` });
  }
  for (let k = -10; k < 60; k++) {
    const y = c.yFirst + k * c.yPitch / 5;
    if (y < c.top + 8 || y > c.bottom - 3) continue;
    const major = k % 5 === 0;
    add(svg, "path", { class: major ? "major" : "minor", d: `M${major ? 49 : 52} ${y}H55` });
    if (major && k >= 0) {
      add(svg, "text", { class: "y", transform: `translate(43 ${y}) rotate(-90)` },
        (c.yStart - 2 * k / 5).toFixed(1));
    }
  }
  add(svg, "text", { class: "axis-name", transform: `translate(16 ${c.nameY}) rotate(-90)` }, "Temperature");
}

function pairs(text) {
  return text.trim().split(/\s+/).map(p => p.split(",").map(Number));
}

function roughen(points, amount) {
  const out = [];
  for (let i = 0; i < points.length - 1; i++) {
    const [x1, y1] = points[i], [x2, y2] = points[i + 1];
    const n = Math.max(1, Math.round((x2 - x1) / 4));
    for (let k = 0; k < n; k++) {
      out.push([x1 + (x2 - x1) * k / n, y1 + (y2 - y1) * k / n + noise() * amount]);
    }
  }
  out.push(points[points.length - 1]);
  return out;
}

const indigo = pairs(`64,794 72,795 85,803 98,807 115,807 137,803 146,806 158,814 180,820 200,820 214,814 228,820 250,826 270,824 292,819 310,824 328,830 345,830 363,823 382,829 405,832 420,828 436,823 450,829 470,830 488,825 505,813 520,810 535,814 553,817 570,809 587,799 605,802 625,805 645,802 668,797 695,802 712,799 730,790 750,786 780,791 795,787 811,777 838,784 860,780 890,770 902,773 915,780 935,778 950,770 965,765 985,770 1015,773 1038,765 1060,769 1090,764 1110,754 1130,756 1155,759 1175,753 1192,748 1215,752 1235,748 1262,739 1280,744 1302,747 1322,741 1336,739 1350,748 1368,752 1383,748 1400,736 1420,728 1440,719 1460,707 1475,694 1500,684 1520,674 1535,663 1548,648 1561,647`);
const pink = pairs(`64,1018 78,1028 95,1031 113,1031 122,1036 136,1033 155,1039 190,1045 210,1042 235,1048 265,1047 290,1048 305,1054 325,1054 340,1059 358,1055 385,1057 411,1062 425,1054 455,1051 470,1043 485,1039 515,1031 540,1027 565,1024 585,1015 600,1018 633,1012 680,1018 705,1010 738,1001 775,1007 800,1002 825,999 860,988 895,982 915,986 940,982 978,972 990,976 1003,970 1018,976 1035,971 1055,975 1085,970 1105,963 1125,968 1150,959 1175,959 1190,952 1225,953 1243,940 1265,946 1290,946 1335,955 1355,956 1365,950 1395,940 1410,931 1425,913 1445,896 1465,887 1480,871 1505,859 1528,845 1545,828 1561,820`);
const blue = pairs(`64,1085 75,1095 92,1103 110,1100 122,1104 136,1101 140,1119 158,1112 185,1112 200,1118 215,1113 228,1118 250,1117 262,1113 270,1126 288,1119 310,1122 320,1127 338,1127 348,1135 362,1129 385,1131 410,1129 435,1123 460,1117 485,1111 505,1111 513,1105 530,1113 543,1119 560,1116 573,1108 590,1117 600,1110 608,1122 618,1122 633,1139 645,1133 655,1133 662,1118 685,1113 695,1108 705,1110 715,1095 735,1087 757,1092 768,1087 780,1091 793,1077 825,1073 845,1068 872,1059 892,1065 906,1094 920,1080 950,1062 970,1067 982,1087 990,1085 1004,1103 1019,1084 1035,1091 1050,1095 1068,1078 1080,1070 1086,1076 1108,1053 1136,1048 1143,1065 1153,1077 1168,1069 1190,1052 1230,1039 1242,1050 1250,1039 1275,1035 1293,1049 1308,1037 1333,1046 1345,1058 1352,1075 1362,1082 1378,1069 1392,1048 1409,1018 1417,1026 1433,1016 1450,998 1468,981 1497,961 1502,968 1520,955 1545,934 1552,935 1561,924`);

drawChart("chart-env", {
  top: 79, bottom: 678, y0: 0, scaleY: 0.4924, skip: 2,
  xMajor: [96, 314, 531, 749, 966, 1183],
  xLabels: [["22:00", "2016-11-29"], ["00:00"], ["02:00"], ["04:00"], ["06:00"], ["08:00"]],
  labelY: [706, 733],
  yFirst: 126, yPitch: 85.4, yStart: 26, nameY: 378,
  series: [
    { name: "c-red", points: [[64, 170], [1561, 170]] },
    { name: "c-indigo", points: indigo },
    { name: "c-pink", points: roughen(pink, 3) },
    { name: "c-blue", points: roughen(blue, 4) }
  ]
});

// Saw-tooth: a sharp drop after each peak, then a slow climb.
const fast = pairs(`76,1057 83,1300 96,1078 101,1287 110,1095 118,1302 125,1100 133,1312 140,1107 148,1312 155,1134 163,1312 169,1118 178,1348 185,1153 195,1358 202,1156 212,1378 219,1138 229,1372 237,1155 245,1320 253,1138 260,1342 267,1158 275,1355 282,1162 292,1370 299,1158 308,1370 315,1148 325,1348 331,1170 341,1362 348,1163 357,1370 366,1178 375,1365 383,1163 393,1378 401,1146 410,1370 418,1142 427,1370 434,1154 444,1368 452,1170 461,1360 470,1150 477,1348 486,1153 495,1348 502,1136 511,1352 518,1146 527,1342 534,1150 543,1341 550,1146 558,1335 565,1145 573,1312 579,1133 588,1345 597,1131 605,1325 633,1098 640,1330 670,1092 677,1326 706,1089 713,1302 740,1087 748,1319 775,1089 783,1309 812,1082 819,1309 848,1076 855,1310 885,1082 892,1306 922,1076 930,1303 960,1074 966,1302 996,1070 1003,1313 1035,1070 1042,1297 1070,1074 1079,1309 1109,1066 1117,1300 1147,1070 1155,1299 1183,1070 1190,1318 1222,1063 1229,1298 1260,1063 1266,1299 1297,1062 1303,1297 1333,1068 1340,1303 1371,1061 1378,1300 1408,1062 1415,1302 1444,1070 1451,1302 1480,1067 1488,1298 1515,1070 1524,1302 1551,1057 1557,1300`);
const green = [[64, 1225], [70, 1160]];
for (let i = 0; i < fast.length; i += 2) {
  const [px, py] = fast[i], [tx, ty] = fast[i + 1];
  const w = tx - px, h = ty - py;
  green.push([px, py], [px + w * 0.2, py + 4], [px + w * 0.35, py + h * 0.55], [px + w * 0.7, py + h * 0.8], [tx, ty], [tx + w * 0.4, ty - h * 0.06]);
}
green.push([1561, 1290]);

function band(level) {
  const points = [];
  for (let x = 64; x < 1528; x += 3) {
    const high = Math.sin(x / 5) + noise() * 2.6 > -0.3;
    points.push([x, level + (high ? -3 : 4) + noise() * 3]);
  }
  for (let x = 1528; x < 1561; x++) points.push([x, level + (x % 2 ? 11 : -8)]);
  return points;
}

drawChart("chart-temp", {
  top: 829, bottom: 1446, y0: 768.5, scaleY: 0.4906, skip: 1,
  xMajor: [185, 511, 837, 1163],
  xLabels: [["12:00", "2016-11-29"], ["18:00", "11-29"], ["00:00", "11-30"], ["06:00", "11-30"]],
  labelY: [1475, 1502],
  yFirst: 877, yPitch: 63.8, yStart: 34, nameY: 1137,
  series: [
    { name: "c-red", points: band(152) },
    { name: "c-navy", points: band(137) },
    { name: "c-green", points: green }
  ]
});
```
